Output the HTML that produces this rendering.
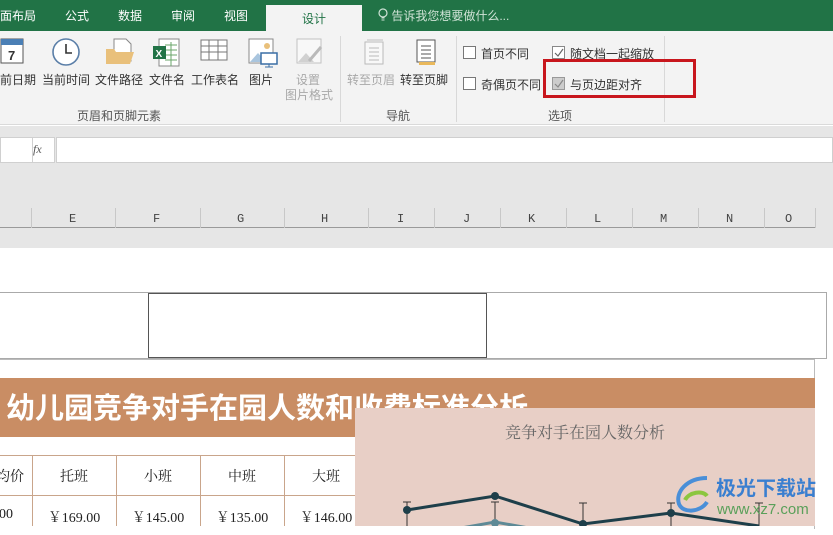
<!DOCTYPE html>
<html><head><meta charset="utf-8"><style>
*{margin:0;padding:0;box-sizing:border-box}
body{width:833px;height:526px;overflow:hidden;position:relative;background:#fff;font-family:"Liberation Sans","Noto Sans CJK SC",sans-serif;font-size:12px;color:#333}
.a{position:absolute}
.tab{position:absolute;top:0;height:31px;line-height:33px;color:#fff;font-size:12px}
.btn{position:absolute;top:71px;font-size:12px;color:#333;white-space:nowrap}
.dis{color:#a8a8a8}
.cb{position:absolute;width:13px;height:13px;border:1px solid #777;background:#fff}
.col{position:absolute;top:212px;font-family:"Liberation Mono",monospace;font-size:12px;color:#444}
.vl{position:absolute;top:208px;height:20px;width:1px;background:#c8c8c8}
.td{position:absolute;font-family:"Liberation Serif","Noto Serif CJK SC",serif;font-size:14px;color:#222;text-align:center}
</style></head><body>
<!-- tab bar -->
<div class="a" style="left:0;top:0;width:833px;height:31px;background:#217346"></div>
<div class="tab" style="left:0">面布局</div>
<div class="tab" style="left:65px">公式</div>
<div class="tab" style="left:118px">数据</div>
<div class="tab" style="left:171px">审阅</div>
<div class="tab" style="left:224px">视图</div>
<div class="a" style="left:266px;top:5px;width:96px;height:26px;background:#f3f3f3;text-align:center;line-height:28px;color:#217346">设计</div>
<div class="tab" style="left:378px;color:#cfe3d6">
<svg width="10" height="14" style="vertical-align:-2px" viewBox="0 0 10 14"><circle cx="5" cy="5" r="4" fill="none" stroke="#cfe3d6" stroke-width="1.2"/><path d="M3.5 10h3M3.5 12h3" stroke="#cfe3d6"/></svg> 告诉我您想要做什么...</div>
<!-- ribbon -->
<div class="a" style="left:0;top:31px;width:833px;height:94px;background:#f3f3f3;border-bottom:1px solid #dadada"></div>
<div class="a" style="left:340px;top:36px;width:1px;height:86px;background:#d8d8d8"></div>
<div class="a" style="left:456px;top:36px;width:1px;height:86px;background:#d8d8d8"></div>
<div class="a" style="left:664px;top:36px;width:1px;height:86px;background:#d8d8d8"></div>
<!-- icons -->
<svg class="a" style="left:0;top:37px" width="26" height="30"><rect x="1" y="2" width="22" height="24" fill="#fff" stroke="#555"/><rect x="1" y="2" width="22" height="6" fill="#4a7fb5"/><text x="8" y="23" font-size="13" font-weight="bold" fill="#333" font-family="Liberation Sans">7</text></svg>
<svg class="a" style="left:51px;top:37px" width="30" height="30"><circle cx="15" cy="15" r="13" fill="#fff" stroke="#5b7fa8" stroke-width="1.6"/><path d="M15 7v9h6" fill="none" stroke="#333" stroke-width="1.6"/></svg>
<svg class="a" style="left:104px;top:37px" width="32" height="30"><path d="M10 2h12l5 5v17H10z" fill="#fff" stroke="#888"/><path d="M2 12h8l2 3h18l-4 12H2z" fill="#e9c07b"/></svg>
<svg class="a" style="left:151px;top:37px" width="30" height="32"><rect x="8" y="2" width="20" height="27" fill="#fff" stroke="#888"/><path d="M14 8h12M14 13h12M14 18h12M14 23h12M20 5v24" stroke="#6aa66a"/><rect x="2" y="9" width="13" height="13" fill="#217346"/><text x="4.5" y="20" font-size="10" font-weight="bold" fill="#fff" font-family="Liberation Sans">X</text></svg>
<svg class="a" style="left:199px;top:38px" width="30" height="28"><rect x="2" y="2" width="26" height="20" fill="#fff" stroke="#777"/><path d="M2 8h26M2 14h26M10 2v20M19 2v20" stroke="#777"/></svg>
<svg class="a" style="left:247px;top:37px" width="32" height="32"><rect x="2" y="2" width="24" height="24" fill="#fff" stroke="#888"/><path d="M3 25l8-9 8 9z" fill="#a9c5de"/><circle cx="20" cy="9" r="3" fill="#e9c07b"/><rect x="14" y="16" width="16" height="11" fill="#fff" stroke="#3a6ea5" stroke-width="1.5"/><path d="M22 27v3M18 30h8" stroke="#3a6ea5"/></svg>
<svg class="a" style="left:295px;top:37px" width="30" height="30" opacity=".45"><rect x="2" y="2" width="24" height="24" fill="#fff" stroke="#888"/><path d="M3 25l8-9 8 9z" fill="#aaa"/><path d="M14 24l12-14" stroke="#777" stroke-width="3"/></svg>
<svg class="a" style="left:361px;top:38px" width="26" height="30" opacity=".45"><rect x="4" y="4" width="18" height="22" fill="#fff" stroke="#777"/><path d="M8 10h10M8 14h10M8 18h10M8 22h10" stroke="#777"/><rect x="6" y="1" width="16" height="3" fill="#bbb"/></svg>
<svg class="a" style="left:413px;top:38px" width="26" height="30"><rect x="4" y="2" width="18" height="22" fill="#fff" stroke="#555"/><path d="M8 8h10M8 12h10M8 16h10M8 20h10" stroke="#555"/><rect x="6" y="24" width="16" height="3" fill="#e9b85b"/></svg>
<div class="btn" style="left:0">前日期</div>
<div class="btn" style="left:42px">当前时间</div>
<div class="btn" style="left:95px">文件路径</div>
<div class="btn" style="left:149px">文件名</div>
<div class="btn" style="left:191px">工作表名</div>
<div class="btn" style="left:249px">图片</div>
<div class="btn dis" style="left:296px">设置</div>
<div class="btn dis" style="left:285px;top:86px">图片格式</div>
<div class="btn dis" style="left:347px">转至页眉</div>
<div class="btn" style="left:400px">转至页脚</div>
<div class="a" style="left:77px;top:107px;color:#555">页眉和页脚元素</div>
<div class="a" style="left:386px;top:107px;color:#555">导航</div>
<div class="a" style="left:548px;top:107px;color:#555">选项</div>
<div class="cb" style="left:463px;top:46px"></div><div class="a" style="left:481px;top:45px">首页不同</div>
<div class="cb" style="left:463px;top:77px"></div><div class="a" style="left:481px;top:76px">奇偶页不同</div>
<div class="cb" style="left:552px;top:46px;border-color:#888">
<svg width="11" height="11" style="position:absolute;left:0;top:0"><path d="M2 6l3 3 5-7" fill="none" stroke="#666" stroke-width="1.2"/></svg></div><div class="a" style="left:570px;top:45px">随文档一起缩放</div>
<div class="cb" style="left:552px;top:77px;background:#ccc;border-color:#999">
<svg width="11" height="11" style="position:absolute;left:0;top:0"><path d="M2 6l3 3 5-7" fill="none" stroke="#888" stroke-width="1.2"/></svg></div><div class="a" style="left:570px;top:76px">与页边距对齐</div>
<div class="a" style="left:543px;top:59px;width:153px;height:39px;border:3px solid #c8161d"></div>
<!-- formula bar -->
<div class="a" style="left:0;top:126px;width:833px;height:122px;background:#e6e6e6"></div>
<div class="a" style="left:0;top:137px;width:33px;height:26px;background:#fff;border:1px solid #d0d0d0"></div>
<div class="a" style="left:33px;top:137px;width:22px;height:26px;background:#fff;border:1px solid #d0d0d0;border-left:none;font-family:'Liberation Serif',serif;font-style:italic;font-size:12px;color:#555;padding:4px 0 0 0">fx</div>
<div class="a" style="left:56px;top:137px;width:777px;height:26px;background:#fff;border:1px solid #cfcfcf"></div>
<!-- column headers -->
<div class="a" style="left:0;top:208px;width:815px;height:20px;border-bottom:1px solid #9a9a9a"></div>
<div class="vl" style="left:31px"></div><div class="vl" style="left:115px"></div><div class="vl" style="left:200px"></div><div class="vl" style="left:284px"></div><div class="vl" style="left:368px"></div><div class="vl" style="left:434px"></div><div class="vl" style="left:500px"></div><div class="vl" style="left:566px"></div><div class="vl" style="left:632px"></div><div class="vl" style="left:698px"></div><div class="vl" style="left:764px"></div><div class="vl" style="left:815px"></div>
<div class="col" style="left:69px">E</div><div class="col" style="left:153px">F</div><div class="col" style="left:237px">G</div><div class="col" style="left:321px">H</div><div class="col" style="left:397px">I</div><div class="col" style="left:463px">J</div><div class="col" style="left:528px">K</div><div class="col" style="left:594px">L</div><div class="col" style="left:660px">M</div><div class="col" style="left:726px">N</div><div class="col" style="left:785px">O</div>
<!-- page -->
<div class="a" style="left:0;top:292px;width:827px;height:67px;border:1px solid #aaa;border-left:none"></div>
<div class="a" style="left:148px;top:293px;width:339px;height:65px;border:1.5px solid #555"></div>
<div class="a" style="left:0;top:359px;width:815px;height:170px;border-top:1px solid #bbb;border-right:1px solid #bbb"></div>
<div class="a" style="left:0;top:378px;width:815px;height:59px;background:#c98d64"></div>
<div class="a" style="left:6px;top:386px;color:#fff;font-size:29px;font-weight:bold;white-space:nowrap;font-family:'Noto Sans CJK SC',sans-serif;line-height:40px">幼儿园竞争对手在园人数和收费标准分析</div>
<!-- table -->
<div class="a" style="left:0;top:455px;width:360px;height:80px;border-top:1px solid #c9a58b"></div>
<div class="a" style="left:0;top:495px;width:360px;height:1px;background:#c9a58b"></div>
<div class="a" style="left:32px;top:455px;width:1px;height:71px;background:#c9a58b"></div>
<div class="a" style="left:116px;top:455px;width:1px;height:71px;background:#c9a58b"></div>
<div class="a" style="left:200px;top:455px;width:1px;height:71px;background:#c9a58b"></div>
<div class="a" style="left:284px;top:455px;width:1px;height:71px;background:#c9a58b"></div>
<div class="td" style="left:-10px;top:466px;width:40px">均价</div>
<div class="td" style="left:32px;top:466px;width:84px">托班</div>
<div class="td" style="left:116px;top:466px;width:84px">小班</div>
<div class="td" style="left:200px;top:466px;width:84px">中班</div>
<div class="td" style="left:284px;top:466px;width:84px">大班</div>
<div class="td" style="left:-14px;top:507px;width:40px">00</div>
<div class="td" style="left:32px;top:507px;width:84px">￥169.00</div>
<div class="td" style="left:116px;top:507px;width:84px">￥145.00</div>
<div class="td" style="left:200px;top:507px;width:84px">￥135.00</div>
<div class="td" style="left:284px;top:507px;width:84px">￥146.00</div>
<!-- chart -->
<div class="a" style="left:355px;top:408px;width:460px;height:118px;background:#e8cfc6"></div>
<div class="a" style="left:355px;top:420px;width:460px;text-align:center;font-size:16px;color:#666;font-family:'Noto Serif CJK SC',serif">竞争对手在园人数分析</div>
<svg class="a" style="left:355px;top:408px" width="478" height="118">
<g stroke="#333" stroke-width="1"><path d="M52 94v30M48 94h8M140 94v30M136 94h8M228 95v30M224 95h8M316 95v30M312 95h8M404 95v30M400 95h8"/></g>
<path d="M52 102L140 88 228 116 316 105 404 118" fill="none" stroke="#1e3f4a" stroke-width="3"/>
<g fill="#1e3f4a"><circle cx="52" cy="102" r="4"/><circle cx="140" cy="88" r="4"/><circle cx="228" cy="116" r="4"/><circle cx="316" cy="105" r="4"/></g>
<path d="M95 122L140 114 185 122" fill="none" stroke="#5e8a96" stroke-width="3"/><circle cx="140" cy="115" r="4" fill="#5e8a96"/>
</svg>
<!-- watermark -->
<svg class="a" style="left:673px;top:474px" width="44" height="40"><path d="M34 4C14 4 2 18 6 30c4 10 22 8 28-2" fill="none" stroke="#4a8fd8" stroke-width="4"/><path d="M12 26c4-8 18-10 22-4" fill="none" stroke="#8cc63f" stroke-width="4"/></svg>
<div class="a" style="left:716px;top:474px;font-size:20px;font-weight:bold;color:#3a7fd0;font-family:'Noto Sans CJK SC',sans-serif;line-height:26px">极光下载站</div>
<div class="a" style="left:717px;top:501px;font-size:15px;color:#5aa05a">www.xz7.com</div>
</body></html>
